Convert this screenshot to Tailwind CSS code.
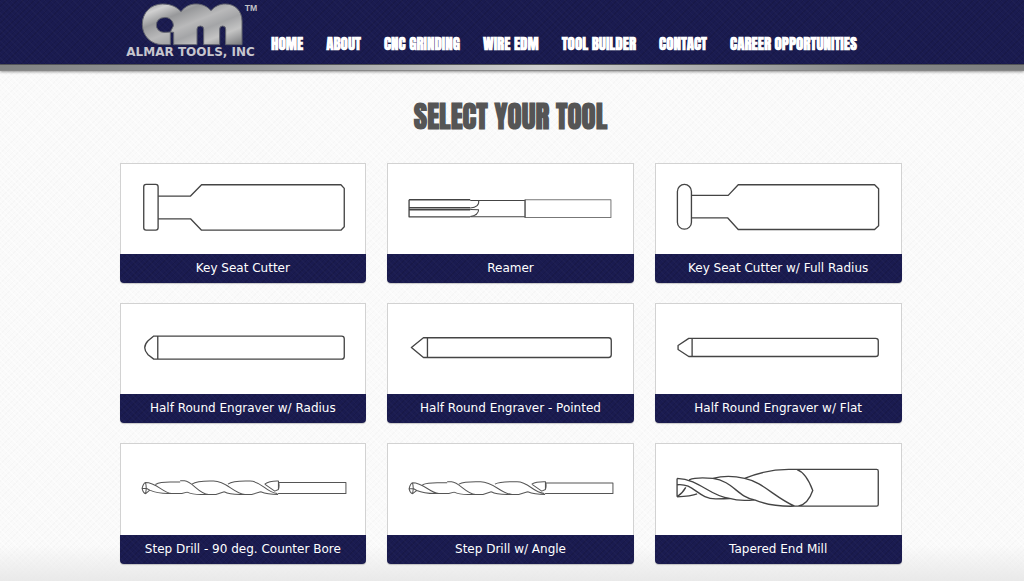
<!DOCTYPE html>
<html lang="en">
<head>
<meta charset="utf-8">
<meta name="viewport" content="width=device-width, initial-scale=1">
<title>Almar Tools, Inc - Select Your Tool</title>
<script src="https://cdn.jsdelivr.net/npm/@tailwindcss/browser@4"></script>
</head>
<body class="min-h-screen overflow-x-hidden bg-[#fafafa] bg-[linear-gradient(to_top,#e9e9e9,#fafafa00_36px),repeating-linear-gradient(45deg,#ffffff80_0_1px,transparent_1px_4px),repeating-linear-gradient(135deg,#00000004_0_1px,transparent_1px_4px)] font-['Verdana','DejaVu_Sans',sans-serif]">
<header class="border-b border-[#55575c] bg-[#1a1b50] bg-[repeating-linear-gradient(45deg,#ffffff05_0_1px,transparent_1px_4px),repeating-linear-gradient(135deg,#00000018_0_1px,transparent_1px_4px)]">
  <div class="mx-auto flex h-16 max-w-[782px] items-start">
    <a href="#" aria-label="Almar Tools, Inc" class="ml-1 block shrink-0">
      <svg class="block h-16 w-[138px]" viewBox="42 0 414 192" aria-hidden="true">
        <defs>
          <linearGradient id="metal" x1="0" y1="0" x2="1" y2="1">
            <stop offset="0" stop-color="#8f9092"/><stop offset=".14" stop-color="#d0d0d0"/><stop offset=".3" stop-color="#97989a"/><stop offset=".48" stop-color="#b9b9ba"/><stop offset=".62" stop-color="#a4a5a7"/><stop offset=".78" stop-color="#c4c4c4"/><stop offset="1" stop-color="#77787b"/>
          </linearGradient>
        </defs>
        <path fill="url(#metal)" stroke="#62646e" stroke-width="3" fill-rule="evenodd" d="M155 12C181 12 199 22 210 35C222 19 238 12 255 12C274 12 290 20 300 32C311 19 326 12 343 12C373 12 393 33 393 63V134H344V87Q344 78 335 78Q326 78 326 87V134H278V87Q278 78 268 78Q258 78 258 87V134H188V97L178 96V134H155C119 134 94 107 94 73C94 38 119 12 155 12ZM158 53A21 21 0 1 0 158 97Q169 97 178 96L187 78A24 24 0 0 0 158 53Z"/>
        <text x="401" y="34" fill="#c2c2c7" font-family="Liberation Sans" font-weight="700" font-size="26">TM</text>
        <text x="46" y="168" fill="#c6c6ce" font-family="DejaVu Sans" font-weight="700" font-size="36">ALMAR TOOLS, INC</text>
      </svg>
    </a>
    <nav class="pt-[34px] pl-2">
      <ul class="flex gap-[23px] font-['Anton','Liberation_Sans_Narrow','Roboto_Condensed',sans-serif] text-[15px] leading-5 font-bold whitespace-nowrap text-white">
        <li><a href="#">HOME</a></li>
        <li><a href="#">ABOUT</a></li>
        <li><a href="#">CNC GRINDING</a></li>
        <li><a href="#">WIRE EDM</a></li>
        <li><a href="#">TOOL BUILDER</a></li>
        <li><a href="#">CONTACT</a></li>
        <li><a href="#">CAREER OPPORTUNITIES</a></li>
      </ul>
    </nav>
  </div>
</header>
<div class="h-[6px] border-b border-[#888] bg-[linear-gradient(to_right,#808283,#999b9c_25%,#d0d0d0_53%,#858788_85%,#7c7e7f)] shadow-[0_1px_3px_#0006]"></div>
<main class="mx-auto max-w-[785px] pr-[3px] pb-4">
  <h1 class="pt-6 text-center font-['Anton','Liberation_Sans_Narrow','Roboto_Condensed',sans-serif] text-[29px] leading-[44px] font-bold text-[#555]">SELECT YOUR TOOL</h1>
  <ul class="mt-6 grid grid-cols-3 gap-x-[21px] gap-y-5 text-center text-xs text-white">
    <li><a href="#" class="block"><span class="block border border-b-0 border-[#d2d2d2] bg-white pb-px"><svg class="block h-auto w-full" viewBox="18 18 732 267" fill="none" stroke="#444" stroke-width="4" stroke-linejoin="round" aria-hidden="true"><rect x="86" y="79" width="43" height="137" rx="7"/><path d="M129 114H226L259 80H676L686 91V206L676 216H259L226 182H129"/></svg></span><span class="block rounded-b bg-[#1a1b50] bg-[repeating-linear-gradient(45deg,#ffffff05_0_1px,transparent_1px_4px),repeating-linear-gradient(135deg,#00000018_0_1px,transparent_1px_4px)] leading-[29px] shadow-[0_1px_1px_#0003]">Key Seat Cutter</span></a></li>
    <li><a href="#" class="block"><span class="block border border-b-0 border-[#d2d2d2] bg-white pb-px"><svg class="block h-auto w-full" viewBox="18 18 732 267" fill="none" stroke="#444" stroke-width="3" stroke-linejoin="round" aria-hidden="true"><path d="M290 127H428M265 176H428"/><rect x="428" y="125" width="257" height="53" stroke="#777"/><path d="M428 125V178"/><path stroke-width="4" d="M81 125H264M81 125V176H264M81 149H264M81 155H264"/><path d="M264 127H289C292 139 283 148 264 150M264 154L289 155C289 166 278 173 264 175"/></svg></span><span class="block rounded-b bg-[#1a1b50] bg-[repeating-linear-gradient(45deg,#ffffff05_0_1px,transparent_1px_4px),repeating-linear-gradient(135deg,#00000018_0_1px,transparent_1px_4px)] leading-[29px] shadow-[0_1px_1px_#0003]">Reamer</span></a></li>
    <li><a href="#" class="block"><span class="block border border-b-0 border-[#d2d2d2] bg-white pb-px"><svg class="block h-auto w-full" viewBox="20 18 732 267" fill="none" stroke="#444" stroke-width="4" stroke-linejoin="round" aria-hidden="true"><rect x="84" y="79" width="42" height="134" rx="21"/><path d="M126 112H236L266 80H674L686 92V203L674 214H266L234 179H126"/></svg></span><span class="block rounded-b bg-[#1a1b50] bg-[repeating-linear-gradient(45deg,#ffffff05_0_1px,transparent_1px_4px),repeating-linear-gradient(135deg,#00000018_0_1px,transparent_1px_4px)] leading-[29px] shadow-[0_1px_1px_#0003]">Key Seat Cutter w/ Full Radius</span></a></li>
    <li><a href="#" class="block"><span class="block border border-b-0 border-[#d2d2d2] bg-white pb-px"><svg class="block h-auto w-full" viewBox="18 13 732 267" fill="none" stroke="#444" stroke-width="4" stroke-linejoin="round" aria-hidden="true"><path d="M116 109H678Q686 109 686 117V170Q686 178 678 178H116L99 165Q89 154 89 144Q89 133 99 123ZM128 109V178"/></svg></span><span class="block rounded-b bg-[#1a1b50] bg-[repeating-linear-gradient(45deg,#ffffff05_0_1px,transparent_1px_4px),repeating-linear-gradient(135deg,#00000018_0_1px,transparent_1px_4px)] leading-[29px] shadow-[0_1px_1px_#0003]">Half Round Engraver w/ Radius</span></a></li>
    <li><a href="#" class="block"><span class="block border border-b-0 border-[#d2d2d2] bg-white pb-px"><svg class="block h-auto w-full" viewBox="18 13 732 267" fill="none" stroke="#444" stroke-width="4" stroke-linejoin="round" aria-hidden="true"><path d="M124 114H678Q686 114 686 122V165Q686 173 678 173H124L88 143ZM136 114V173"/></svg></span><span class="block rounded-b bg-[#1a1b50] bg-[repeating-linear-gradient(45deg,#ffffff05_0_1px,transparent_1px_4px),repeating-linear-gradient(135deg,#00000018_0_1px,transparent_1px_4px)] leading-[29px] shadow-[0_1px_1px_#0003]">Half Round Engraver - Pointed</span></a></li>
    <li><a href="#" class="block"><span class="block border border-b-0 border-[#d2d2d2] bg-white pb-px"><svg class="block h-auto w-full" viewBox="20 13 732 267" fill="none" stroke="#444" stroke-width="4" stroke-linejoin="round" aria-hidden="true"><path d="M118 116H677Q685 116 685 123V163Q685 170 677 170H118L86 149V137ZM128 116V170"/></svg></span><span class="block rounded-b bg-[#1a1b50] bg-[repeating-linear-gradient(45deg,#ffffff05_0_1px,transparent_1px_4px),repeating-linear-gradient(135deg,#00000018_0_1px,transparent_1px_4px)] leading-[29px] shadow-[0_1px_1px_#0003]">Half Round Engraver w/ Flat</span></a></li>
    <li><a href="#" class="block"><span class="block border border-b-0 border-[#d2d2d2] bg-white pb-px"><svg class="block h-auto w-full" viewBox="18 12 732 267" fill="none" stroke="#555" stroke-width="3" stroke-linejoin="round" aria-hidden="true"><path d="M488 127H691V160H488M91 127Q85 129 81 145Q84 158 91 161M91 127Q96 143 91 161M81 145H95L104 150L91 161M91 127C125 127 142 158 170 160M121 133Q135 126 165 126H195M104 150Q128 161 165 160H200L216 156M195 122H208C232 124 250 161 280 163M230 132C248 121 278 123 295 123C335 123 355 161 389 163M216 156Q231 164 265 163H302L327 155M338 132C354 121 380 123 404 123C440 123 450 157 486 160M327 155Q341 163 374 163H409L436 155M436 155Q456 163 488 163M448 132C463 122 475 123 489 123V148L478 153L448 132M489 123Q493 137 489 148"/></svg></span><span class="block rounded-b bg-[#1a1b50] bg-[repeating-linear-gradient(45deg,#ffffff05_0_1px,transparent_1px_4px),repeating-linear-gradient(135deg,#00000018_0_1px,transparent_1px_4px)] leading-[29px] shadow-[0_1px_1px_#0003]">Step Drill - 90 deg. Counter Bore</span></a></li>
    <li><a href="#" class="block"><span class="block border border-b-0 border-[#d2d2d2] bg-white pb-px"><svg class="block h-auto w-full" viewBox="18 12 732 267" fill="none" stroke="#555" stroke-width="3" stroke-linejoin="round" aria-hidden="true"><path d="M488 129H691V160H488M91 128Q85 130 81 146Q84 158 91 161M91 128Q96 143 91 161M81 146H95L104 151L91 161M91 128C125 128 142 158 170 160M121 134Q135 128 165 128H195M104 151Q128 161 165 160H200L216 156M195 125H208C232 126 250 161 280 163M230 132C248 123 278 125 295 125C335 125 355 161 389 163M216 156Q231 164 265 163H302L327 155M338 132C354 123 380 125 404 125C440 125 450 157 486 160M327 155Q341 163 374 163H409L436 155M436 155Q456 163 488 163M448 132C463 124 475 125 489 125V148L478 153L448 132M489 125Q493 137 489 148"/></svg></span><span class="block rounded-b bg-[#1a1b50] bg-[repeating-linear-gradient(45deg,#ffffff05_0_1px,transparent_1px_4px),repeating-linear-gradient(135deg,#00000018_0_1px,transparent_1px_4px)] leading-[29px] shadow-[0_1px_1px_#0003]">Step Drill w/ Angle</span></a></li>
    <li><a href="#" class="block"><span class="block border border-b-0 border-[#d2d2d2] bg-white pb-px"><svg class="block h-auto w-full" viewBox="20 12 732 267" fill="none" stroke="#444" stroke-width="4" stroke-linejoin="round" aria-hidden="true"><path d="M83 115V170M83 115C150 117 180 168 240 175M83 134C135 128 145 177 200 176Q225 176 240 175M83 170Q125 168 143 161M83 170Q99 160 109 142M119 119C140 111 170 113 190 115C250 122 265 172 315 179M240 175Q270 184 315 179M190 115Q235 103 285 115C340 126 375 172 435 198M315 179Q365 200 435 198H680Q685 198 685 193V93Q685 88 680 88H417Q350 88 285 115M442 89C465 97 479 125 489 151C481 174 470 194 445 198"/></svg></span><span class="block rounded-b bg-[#1a1b50] bg-[repeating-linear-gradient(45deg,#ffffff05_0_1px,transparent_1px_4px),repeating-linear-gradient(135deg,#00000018_0_1px,transparent_1px_4px)] leading-[29px] shadow-[0_1px_1px_#0003]">Tapered End Mill</span></a></li>
  </ul>
</main>
</body>
</html>
